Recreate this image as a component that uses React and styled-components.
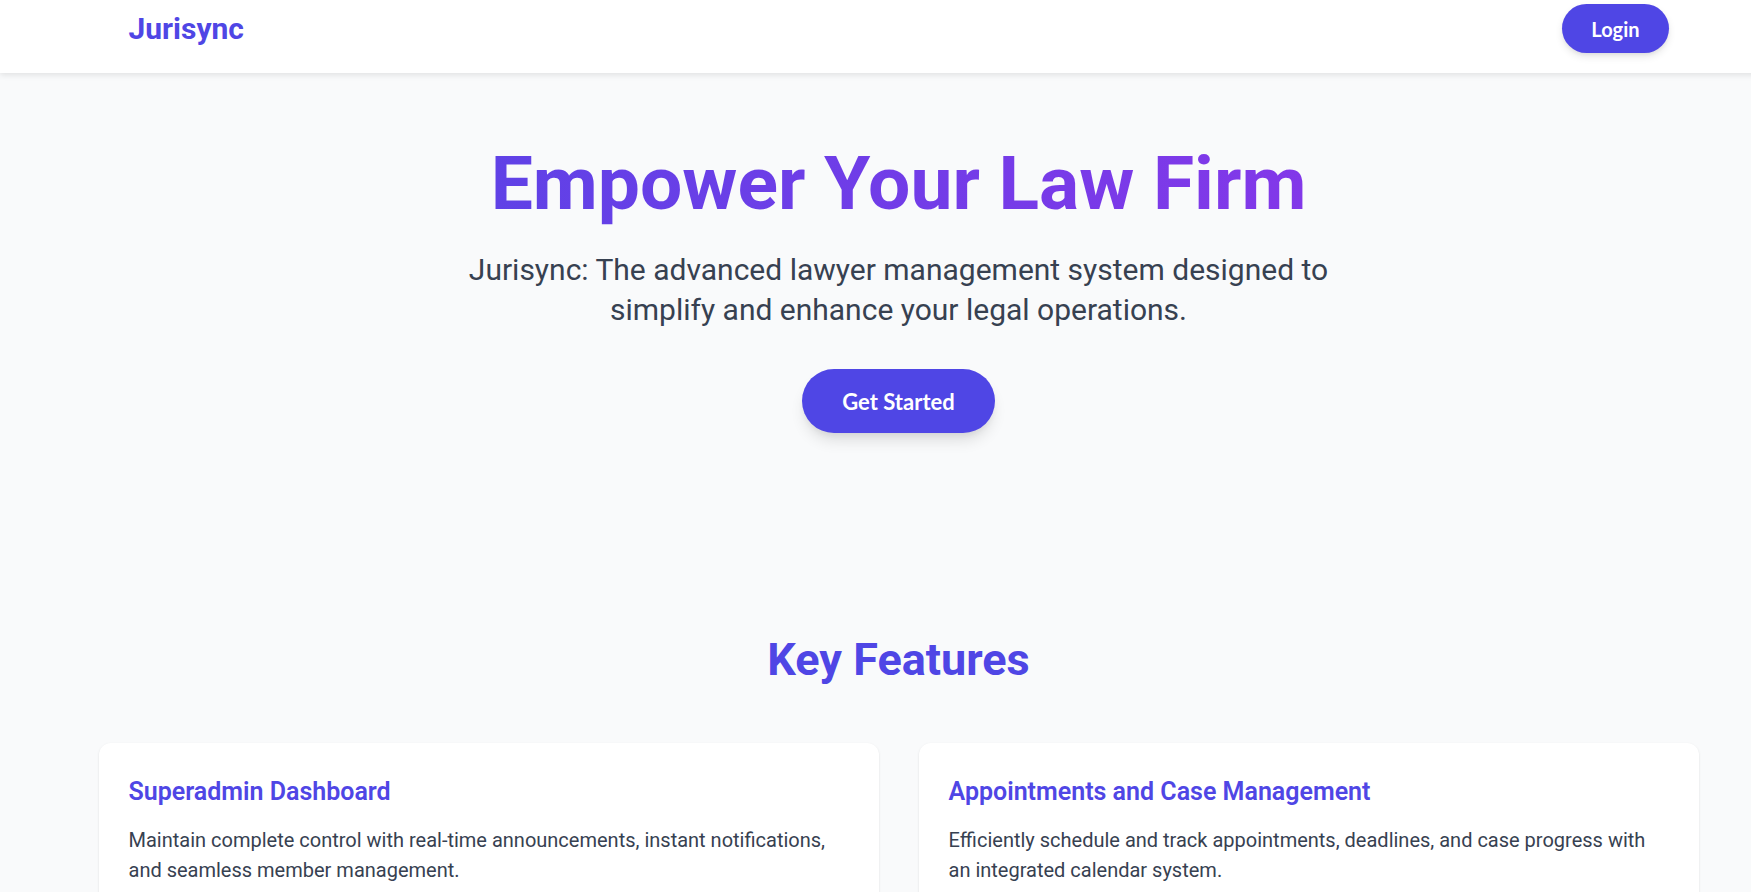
import React from "react";
import styled, { createGlobalStyle } from "styled-components";

// global
const GlobalStyle = createGlobalStyle`
  * {
    box-sizing: border-box;
  }
  body {
    margin: 0;
    font-family: Roboto, "Noto Sans", Arial, sans-serif;
    background: #f9fafb;
    overflow-x: hidden;
  }
`;

// styles
const Page = styled.div`
  width: 1797px;
  min-height: 100vh;
  background: #f9fafb;
`;

const Header = styled.header`
  position: relative;
  z-index: 1;
  background: #ffffff;
  box-shadow: 0 2px 6px rgba(0, 0, 0, 0.1);
`;

const Nav = styled.nav`
  display: flex;
  justify-content: space-between;
  align-items: center;
  max-width: 1600px;
  margin: 0 auto;
  padding: 4px 30px 20px;
`;

const Logo = styled.a`
  font-size: 30px;
  font-weight: 700;
  color: #4f46e5;
  text-decoration: none;
  line-height: 1;
`;

const Button = styled.button`
  display: inline-flex;
  align-items: center;
  justify-content: center;
  height: ${(props) => (props.large ? "64px" : "49px")};
  padding: ${(props) => (props.large ? "0 40px" : "0 29px")};
  border: none;
  border-radius: 9999px;
  background: #4f46e5;
  color: #ffffff;
  font-family: Lato, "Open Sans", sans-serif;
  font-size: ${(props) => (props.large ? "22px" : "20px")};
  font-weight: 700;
  cursor: pointer;
  box-shadow: ${(props) =>
    props.large
      ? "0 10px 15px -3px rgba(0,0,0,0.12), 0 4px 6px -2px rgba(0,0,0,0.06)"
      : "0 4px 8px -1px rgba(0,0,0,0.12), 0 2px 4px -1px rgba(0,0,0,0.06)"};
`;

const Hero = styled.section`
  max-width: 1600px;
  margin: 0 auto;
  padding: 65px 0 100px;
  text-align: center;
`;

const Title = styled.h1`
  margin: 0;
  font-size: 75px;
  font-weight: 700;
  line-height: 1.2;
  background: linear-gradient(to right, #4f46e5, #9333ea);
  -webkit-background-clip: text;
  background-clip: text;
  color: transparent;
`;

const Lead = styled.p`
  max-width: 900px;
  margin: 22px auto 39px;
  font-size: 30px;
  line-height: 40px;
  color: #374151;
`;

const Features = styled.section`
  max-width: 1600px;
  margin: 0 auto;
  padding: 100px 0 60px;
`;

const SectionTitle = styled.h2`
  margin: 0 0 56px;
  text-align: center;
  font-size: 45px;
  font-weight: 700;
  line-height: 1.2;
  color: #4f46e5;
`;

const Grid = styled.div`
  display: grid;
  grid-template-columns: repeat(2, 1fr);
  gap: 40px;
`;

const Card = styled.article`
  background: #ffffff;
  border-radius: 12px;
  padding: 33px 30px 30px;
  box-shadow: 0 1px 3px rgba(0, 0, 0, 0.08), 0 1px 2px rgba(0, 0, 0, 0.04);
`;

const CardTitle = styled.h3`
  margin: 0 0 16px;
  font-size: 25px;
  font-weight: 600;
  line-height: 1.3;
  color: #4f46e5;
`;

const CardText = styled.p`
  margin: 0;
  font-size: 20px;
  line-height: 30px;
  color: #374151;
`;

const features = [
  {
    title: "Superadmin Dashboard",
    text: "Maintain complete control with real-time announcements, instant notifications, and seamless member management.",
  },
  {
    title: "Appointments and Case Management",
    text: "Efficiently schedule and track appointments, deadlines, and case progress with an integrated calendar system.",
  },
  {
    title: "Client Communication",
    text: "Keep clients informed with secure messaging, document sharing and automatic case updates.",
  },
  {
    title: "Billing and Invoicing",
    text: "Track billable hours, generate invoices and manage payments all in one place.",
  },
];

function App() {
  return (
    <Page>
      <GlobalStyle />
      <Header>
        <Nav>
          <Logo href="#">Jurisync</Logo>
          <Button>Login</Button>
        </Nav>
      </Header>
      <Hero>
        <Title>Empower Your Law Firm</Title>
        <Lead>
          Jurisync: The advanced lawyer management system designed to
          simplify and enhance your legal operations.
        </Lead>
        <Button large>Get Started</Button>
      </Hero>
      <Features>
        <SectionTitle>Key Features</SectionTitle>
        <Grid>
          {features.map((f) => (
            <Card key={f.title}>
              <CardTitle>{f.title}</CardTitle>
              <CardText>{f.text}</CardText>
            </Card>
          ))}
        </Grid>
      </Features>
    </Page>
  );
}

export default App;
